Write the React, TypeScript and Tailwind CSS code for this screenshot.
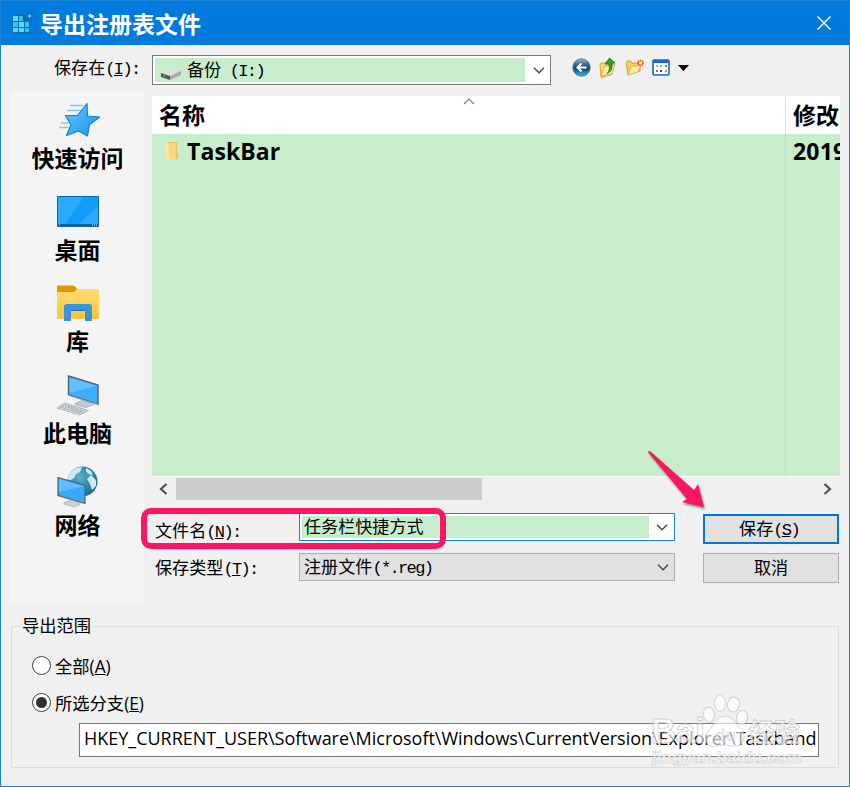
import type { ReactNode } from "react";

const song = "font-['Noto_Sans_CJK_SC',sans-serif] text-[17.1px] leading-[20px] font-normal text-black";
const yahei = "font-['Open_Sans','Noto_Sans_CJK_SC',sans-serif] text-black";

// Half-width latin characters inside the dialog labels
const Half = ({ children }: { children: ReactNode }) => (
  <span className="font-['Liberation_Mono',monospace] font-normal tracking-[-1.7px]">{children}</span>
);

const Chevron = () => (
  <svg width="12" height="7" viewBox="0 0 12 7" fill="none" stroke="#444" strokeWidth="1.3">
    <path d="M1 .8 6 5.8l5-5" />
  </svg>
);

const RegistryIcon = () => (
  <svg width="22" height="22" viewBox="0 0 22 22">
    <path d="M0 3h18v18H0z" fill="#0a6fae" />
    <path d="M1 4h5v5H1zM7 10h5v5H7zM1 16h5v4H1zM7 16h5v4H7z" fill="#5fd9fb" />
    <path d="M7 4h4v5H7zM1 10h5v5H1zM13 10h4v5h-4zM13 16h4v4h-4z" fill="#35c5ea" />
    <path d="m17.500 0 4 4-4 4-4-4z" fill="#0c62a8" />
    <path d="m17.500 1 .9 2.100 2.100.9-2.100.9-.9 2.100-.9-2.100-2.100-.9 2.100-.9z" fill="#4fcdf2" />
  </svg>
);

const StarIcon = () => (
  <svg width="44" height="36" viewBox="0 0 44 36">
    <defs>
      <linearGradient id="star" x1="0" y1="0" x2="1" y2="1">
        <stop offset="0" stopColor="#6ac5fd" />
        <stop offset="1" stopColor="#1494ef" />
      </linearGradient>
    </defs>
    <path d="M14 3.500h13M11 8.500h14M5 21h8M3 25.500h11" stroke="#8bc4ea" strokeWidth="1.300" />
    <path
      d="M31 1.500 31.500 14 44 15 33.500 22.500 31.500 34 22.500 29 10.500 33.500 15 23 9.500 13.500 21.500 13.500z"
      fill="url(#star)"
      stroke="#1682cc"
      strokeWidth="1.200"
      strokeLinejoin="round"
    />
  </svg>
);

const DesktopIcon = () => (
  <svg width="42" height="31" viewBox="0 0 42 31">
    <path d="M.5.5h41v30H.5z" fill="#0ba0ff" stroke="#0868a8" />
    <path d="M1 1h26L8 28H1z" fill="#2babff" />
    <path d="m27 1 14 0v27H8z" fill="#119cfb" />
    <path d="M22 28 41 10v18z" fill="#2eabff" />
    <path d="M1 28h40v2H1z" fill="#075c9a" />
    <path d="M2 28.500h1v1H2zM35 28.500h1v1h-1zM37 28.500h1v1h-1zM39 28.500h1v1h-1z" fill="#fff" />
  </svg>
);

const LibraryIcon = () => (
  <svg width="42" height="37" viewBox="0 0 42 37">
    <defs>
      <linearGradient id="lib" x1="0" y1="0" x2="0" y2="1">
        <stop offset="0" stopColor="#ffdb70" />
        <stop offset="1" stopColor="#fbc43b" />
      </linearGradient>
    </defs>
    <path d="M0 5h18l3-1h20q1 0 1 1v28q0 1-1 1H1q-1 0-1-1z" fill="url(#lib)" />
    <path d="M1 .5h15q1.500 0 2.500 1.500L20 4l-2 2.200q-.7.8-2 .8H0V1.500Q0 .5 1 .5z" fill="#dc9a06" />
    <path d="M7 36V22q0-3 3-3h22q3 0 3 3v14h-7V26H14v10z" fill="#3b94d9" />
    <path d="M14 25.500h14" stroke="#2272b5" />
  </svg>
);

const ComputerIcon = () => (
  <svg width="44" height="41" viewBox="0 0 44 41">
    <path d="m12.500 1 29.500 9v19.500L12.500 20z" fill="#41aefb" stroke="#4c6475" strokeWidth="1.400" />
    <path d="m13.500 2.500 27.500 8.300L13.500 18z" fill="#66beff" />
    <path d="M12 20.500 42 30" stroke="#c3cbd0" />
    <path d="m26 25.500-7 3q-1 1 1 1.500l10 2.500 7-2.500v-1.500z" fill="#c3cbd2" stroke="#9aa4ad" strokeWidth=".7" />
    <path d="m8.500 28 24 7.500-8.500 4.500L1 33z" fill="#dde2e6" stroke="#9ba4aa" strokeWidth=".8" />
    <path d="m6 30.500 21.500 7M4 32l22 6.500M8.500 29.500l21 7" stroke="#8b959c" strokeWidth="1" strokeDasharray="2.200 1" />
  </svg>
);

const NetworkIcon = () => (
  <svg width="42" height="42" viewBox="0 0 42 42">
    <defs>
      <radialGradient id="globe" cx=".4" cy=".35" r=".75">
        <stop offset="0" stopColor="#5caed3" />
        <stop offset="1" stopColor="#16638e" />
      </radialGradient>
    </defs>
    <circle cx="25.500" cy="15.500" r="15" fill="url(#globe)" />
    <path d="m13 7 6-5 6-1-2 5-4 2-2 4-5 3-1-3zM29 2l5 3 2 4-5-1-2-3zM34 9l5 5 0 6-4 4-2-6-3-5z" fill="#cfe9ec" />
    <path d="m1 11.500 27 8v18l-27-8z" fill="#3ba7f8" stroke="#4c6475" strokeWidth="1.200" />
    <path d="m2 13 25 7.200L2 26z" fill="#64bcff" />
    <path d="m14 34-7 2.500 0 1.500 10 3 6-2.500v-1.500z" fill="#cbd1d6" stroke="#9aa4ad" strokeWidth=".6" />
  </svg>
);

const DriveIcon = () => (
  <svg width="22" height="14" viewBox="0 0 22 14">
    <path d="m1 6 12-4 8 2-11 5z" fill="#dedede" />
    <path d="m10 9 11-5v4l-11 5z" fill="#ababab" />
    <path d="m1 6 9 3v4l-9-3z" fill="#555" />
    <path d="m3 8.500 2 .7" stroke="#5ce29c" />
  </svg>
);

const FolderIcon = () => (
  <svg width="15" height="20" viewBox="0 0 15 20">
    <path d="M4 1h9v10l1 1v6H4z" fill="#eec458" />
    <path d="m1 1 4 2v16l-4-2z" fill="#ffe49b" />
    <path d="M5 2h7v16H5z" fill="#fad77c" />
  </svg>
);

const Toolbar = () => (
  <div className="ml-[21px] flex h-[22px] items-center">
    <svg width="19" height="19" viewBox="0 0 19 19">
      <defs>
        <linearGradient id="back" x1="0" y1="0" x2="0" y2="1">
          <stop offset="0" stopColor="#a3b7c8" />
          <stop offset=".4" stopColor="#28587f" />
          <stop offset=".6" stopColor="#12507f" />
          <stop offset="1" stopColor="#40b9e7" />
        </linearGradient>
      </defs>
      <circle cx="9.500" cy="9.500" r="8.700" fill="url(#back)" stroke="#486c8c" strokeWidth=".8" />
      <path d="M14.500 9.500H5.500M9.500 5.500l-4 4 4 4" fill="none" stroke="#fff" strokeWidth="2" />
    </svg>
    <svg className="ml-2" width="19" height="21" viewBox="0 0 19 21">
      <path d="m1 8 1-2h5l1 1.500 5-1 2 1-2 10-11 3z" fill="#f5d675" stroke="#d6a735" />
      <path d="m2 19 3-9 11-3-3 10z" fill="#ffeba4" stroke="#d6a735" strokeWidth=".8" />
      <path d="M8 16.500q3.500-2.500 2-9.500H6L10.500 1l5.500 5h-3q1 8.500-5 10.500z" fill="#2aa32b" stroke="#177719" strokeWidth=".8" />
    </svg>
    <svg className="ml-[7px]" width="20" height="19" viewBox="0 0 20 19">
      <path d="m1 5 1-2h4l1 2h8v8L3 17z" fill="#f2cd65" stroke="#d6a735" />
      <path d="m3 17 3-8 10-2-3 7z" fill="#ffeb9f" stroke="#dcae45" strokeWidth=".8" />
      <path d="M15.500 1.500v7M12 5h7M13 2.500l5 5M18 2.500l-5 5" stroke="#ef5627" strokeWidth="1.300" />
      <circle cx="15.500" cy="5" r="1.700" fill="#ffdf80" />
    </svg>
    <svg className="ml-[7px]" width="18" height="17" viewBox="0 0 18 17">
      <rect x="1" y="1" width="16" height="15" rx="1" fill="#fff" stroke="#1569ce" strokeWidth="1.600" />
      <path d="M1 1h16v3H1z" fill="#1569ce" />
      <path d="M4 6h2v2H4zM8 6h2v2H8z" fill="#9aa7c7" />
      <path d="M13 6h2v2h-2z" fill="#2fa33b" />
      <path d="M4 11h2v2H4z" fill="#e7552b" />
      <path d="M8 11h2v2H8z" fill="#153f9e" />
      <path d="M13 11h2v2h-2z" fill="#d29a1c" />
    </svg>
    <svg className="ml-2" width="11" height="6" viewBox="0 0 11 6">
      <path d="M0 0h11L5.500 6z" fill="#000" />
    </svg>
  </div>
);

const places = [
  { label: "快速访问", icon: <StarIcon /> },
  { label: "桌面", icon: <DesktopIcon /> },
  { label: "库", icon: <LibraryIcon /> },
  { label: "此电脑", icon: <ComputerIcon /> },
  { label: "网络", icon: <NetworkIcon /> },
];

const PlacesBar = () => (
  <nav className="h-[514px] w-[135px] bg-[#f4f4f4] pt-[8px]">
    {places.map((place) => (
      <div key={place.label} className="flex h-[91.7px] flex-col items-center">
        <div className="flex h-[44px] items-center">{place.icon}</div>
        <span className={`${yahei} text-[23px] leading-[33px] font-bold`}>{place.label}</span>
      </div>
    ))}
  </nav>
);

const FileList = () => (
  <div className={`${yahei} h-[380px] w-[688px] overflow-hidden bg-[#c7edcc] text-[23px] font-bold`}>
    <div className="flex h-[38px] bg-white leading-[38px]">
      <div className="flex w-[634px] shrink-0 justify-between border-r border-[#e2e2e2] pl-[7px]">
        <span>名称</span>
        <svg className="mt-[2px] mr-[310px]" width="12" height="7" viewBox="0 0 12 7" fill="none" stroke="#777" strokeWidth="1.2">
          <path d="m1 6 5-5 5 5" />
        </svg>
      </div>
      <span className="pl-[7px] whitespace-nowrap">修改</span>
    </div>
    <div className="flex h-[342px] leading-[35px]">
      <div className="flex w-[634px] shrink-0 border-r border-[#b8dfd0] pl-3">
        <div className="mt-[7px]">
          <FolderIcon />
        </div>
        <span className="ml-2 tracking-[0.1px]">TaskBar</span>
      </div>
      <span className="pl-[7px] tracking-[0.2px]">2019</span>
    </div>
  </div>
);

const ScrollBar = () => (
  <div className="flex h-[25px] w-[688px] items-center justify-between border-t border-[#f8fdf8] pr-2 pl-[7px]">
    <div className="flex items-center">
      <svg width="9" height="12" viewBox="0 0 9 12" fill="none" stroke="#505050" strokeWidth="2.2">
        <path d="M7.500 1 2 6l5.500 5" />
      </svg>
      <div className="ml-2 h-[22px] w-[306px] bg-[#cdcdcd]" />
    </div>
    <svg width="9" height="12" viewBox="0 0 9 12" fill="none" stroke="#505050" strokeWidth="2.2">
      <path d="M1.500 1 7 6l-5.500 5" />
    </svg>
  </div>
);

const Radio = ({ checked, children }: { checked?: boolean; children: ReactNode }) => (
  <div className="flex h-[37px] items-center">
    <span className="flex size-[19px] items-center justify-center rounded-full border-[1.5px] border-[#404040] bg-white">
      {checked && <span className="size-[11px] rounded-full bg-[#303030]" />}
    </span>
    <span className={`${yahei} mt-[2px] ml-[4px] text-[17.3px] leading-[24px]`}>{children}</span>
  </div>
);

const Watermark = () => (
  <svg className="absolute top-[689px] left-[644px]" width="165" height="82" viewBox="0 0 165 82">
    <g fill="#fff" fillOpacity=".7" stroke="#c4c4c4" strokeOpacity=".75" strokeWidth="1">
      <ellipse cx="64" cy="24.500" rx="5.500" ry="7.500" transform="rotate(-8 64 24.500)" />
      <ellipse cx="75" cy="13.500" rx="5.500" ry="8" />
      <ellipse cx="88.500" cy="14.500" rx="6" ry="7.500" transform="rotate(12 88.500 14.500)" />
      <ellipse cx="97" cy="27.500" rx="5.500" ry="7" transform="rotate(15 97 27.500)" />
      <path d="M80 26c8 0 10 7 15 12 7 7 4 18-5 18-5 0-7-1-11-1s-8 2-13 1c-7-2-7-11-1-17 5-5 7-13 15-13z" fillOpacity=".6" />
      <g fontFamily="Liberation Sans" fontWeight="700">
        <text x="6" y="53" fontSize="35" textLength="54" lengthAdjust="spacingAndGlyphs">Bai</text>
        <text x="70" y="51" fontSize="17" fill="#ddd" fillOpacity=".5" strokeWidth=".4">du</text>
        <text x="104" y="52" fontSize="26" textLength="51" lengthAdjust="spacingAndGlyphs" fontFamily="Noto Sans CJK SC">
          经验
        </text>
        <text x="7" y="73" fontSize="16" textLength="150" lengthAdjust="spacingAndGlyphs" strokeWidth=".7">
          jingyan.baidu.com
        </text>
      </g>
    </g>
  </svg>
);

export default function App() {
  return (
    <div className="relative h-[787px] w-[850px] overflow-hidden border border-[#1883d7] bg-[#f0f0f0]">
      <header className="flex h-[44px] items-center justify-between bg-[#007bdb] pr-[18px] pl-[11px]">
        <div className="flex items-center">
          <RegistryIcon />
          <h1 className="ml-[6px] font-['Noto_Sans_CJK_SC',sans-serif] text-[23px] leading-[32px] font-bold text-white">
            导出注册表文件
          </h1>
        </div>
        <svg width="14" height="14" viewBox="0 0 14 14" stroke="#fff" strokeWidth="1.4">
          <path d="m.5.5 13 13M13.500.5l-13 13" />
        </svg>
      </header>

      <div className="flex h-[45px] items-center">
        <label className={`${song} mt-px w-[151px] pl-[53px] whitespace-nowrap`}>
          保存在<Half>(<u>I</u>):</Half>
        </label>
        <div className="mt-[5px] flex h-[30px] w-[399px] border border-[#7a7a7a] bg-white p-[2px]">
          <div className="flex flex-1 items-center bg-[#c7edcc] pl-[5px]">
            <div className="mt-2">
              <DriveIcon />
            </div>
            <span className={`${song} ml-[5px] whitespace-pre`}>
              备份<Half> (I:)</Half>
            </span>
          </div>
          <div className="flex w-[23px] items-center justify-center pl-1">
            <Chevron />
          </div>
        </div>
        <Toolbar />
      </div>

      <div className="flex h-[515px] pl-[9px]">
        <PlacesBar />
        <main className="ml-[7px] pt-[6px]">
          <FileList />
          <ScrollBar />
          <div className="mt-3 flex">
            <div className="flex w-[523px] flex-col gap-[12px]">
              <div className="relative flex h-[28px]">
                <label className={`${song} w-[147px] pt-[7px] pl-[3px]`}>
                  文件名<Half>(<u>N</u>):</Half>
                </label>
                <div className="flex flex-1 border border-[#1883d7] bg-white p-[2px]">
                  <span className={`${song} flex-1 bg-[#c7edcc] pl-[2px]`}>任务栏快捷方式</span>
                  <div className="flex w-[23px] items-center justify-center pl-[3px]">
                    <Chevron />
                  </div>
                </div>
                <div className="absolute top-[-5px] left-[-11px] h-[41px] w-[305px] rounded-[10px] border-[6px] border-[#ff1460]" />
              </div>
              <div className="flex h-[28px]">
                <label className={`${song} w-[147px] pt-[4px] pl-[3px]`}>
                  保存类型<Half>(<u>T</u>):</Half>
                </label>
                <div className="flex flex-1 items-center border border-[#adadad] bg-[#e1e1e1] pr-[5px] pl-[4px]">
                  <span className={`${song} flex-1`}>
                    注册文件<Half>(*.reg)</Half>
                  </span>
                  <Chevron />
                </div>
              </div>
            </div>
            <div className="ml-[28px] flex w-[136px] flex-col gap-[9px] pt-px">
              <button className={`${song} h-[30px] border-2 border-[#0078d7] bg-[#e1e1e1] pr-1`}>
                保存<Half>(<u>S</u>)</Half>
              </button>
              <button className={`${song} h-[30px] border border-[#adadad] bg-[#e1e1e1] pb-[2px]`}>取消</button>
            </div>
          </div>
        </main>
      </div>

      <fieldset className="mt-[9px] ml-[10px] h-[154px] w-[828px] border border-[#dcdcdc] pl-[20px]">
        <legend className={`${yahei} -ml-[12px] px-[2px] text-[17.3px] leading-[24px]`}>导出范围</legend>
        <div className="pt-[9px]">
          <Radio>
            全部(<u>A</u>)
          </Radio>
          <Radio checked>
            所选分支(<u>E</u>)
          </Radio>
        </div>
        <div
          className={`${yahei} mt-[2px] ml-[47px] h-[34px] w-[740px] overflow-hidden border border-[#7a7a7a] bg-white pl-1 text-[18px] leading-[29px] tracking-[-0.02px] whitespace-nowrap`}
        >
          HKEY_CURRENT_USER\Software\Microsoft\Windows\CurrentVersion\Explorer\Taskband
        </div>
      </fieldset>

      <Watermark />

      <svg className="absolute top-[447px] left-[643px] drop-shadow-[1px_2px_1px_rgba(0,0,0,0.45)]" width="64" height="64" viewBox="0 0 64 64">
        <path d="M4 4Q5 2 7 4L50 42l4-6 6 23-22-5 5-3Z" fill="#ff1460" />
      </svg>
    </div>
  );
}
